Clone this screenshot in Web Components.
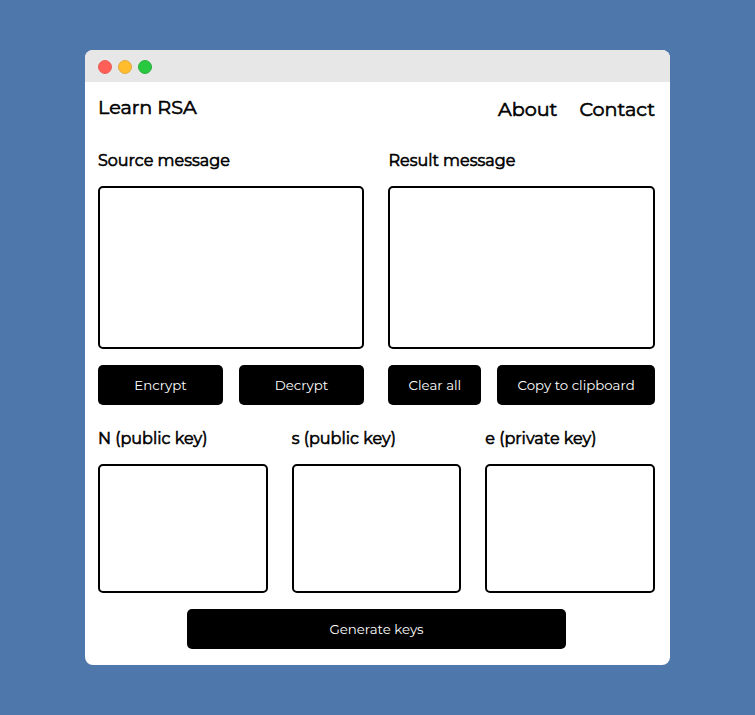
<!DOCTYPE html>
<html lang="en">
<head>
<meta charset="utf-8">
<title>Learn RSA</title>
<style>
html, body { margin: 0; height: 100%; }
body { background: #4e77ab; color: #000; font-family: Montserrat, Inter, "Open Sans", sans-serif; }
</style>
</head>
<body>
<rsa-app></rsa-app>
<script>
function define(name, html) {
  const template = document.createElement('template');
  template.innerHTML = html;
  customElements.define(name, class extends HTMLElement {
    connectedCallback() {
      if (!this.shadowRoot) {
        this.attachShadow({ mode: 'open' }).append(template.content.cloneNode(true));
      }
    }
  });
}

define('window-frame', `
<style>
:host { display: flex; flex-direction: column; width: 585px; height: 615px; border-radius: 8px; background: #fff; overflow: hidden; }
.bar { display: flex; gap: 6px; box-sizing: border-box; height: 32px; flex: none; padding: 10px 0 0 13px; background: #e7e7e7; }
i { box-sizing: border-box; width: 14px; height: 14px; border-radius: 50%; border: 1px solid; }
.r { background: #ff5f57; border-color: #ec5f59; }
.y { background: #ffbd2e; border-color: #e2aa40; }
.g { background: #28c940; border-color: #2aae3e; }
main { padding: 0 15px 0 13px; }
</style>
<div class="bar"><i class="r"></i><i class="y"></i><i class="g"></i></div>
<main><slot></slot></main>`);

define('site-header', `
<style>
:host { display: flex; justify-content: space-between; height: 65px; box-sizing: border-box; padding-top: 13px; font-size: 19.2px; line-height: 24px; -webkit-text-stroke: 0.6px #000; }
nav { display: flex; gap: 22px; padding-top: 2px; }
</style>
<span class="brand">Learn RSA</span>
<nav><span>About</span><span>Contact</span></nav>`);

define('text-panel', `
<style>
:host { display: flex; flex-direction: column; flex: 1 1 0; min-width: 0; }
label { display: block; box-sizing: border-box; height: 39px; padding-top: 1px; font-size: 16px; line-height: 26px; font-weight: 400; -webkit-text-stroke: 0.6px #000; }
textarea { display: block; box-sizing: border-box; width: 100%; height: var(--box-height); margin: 0; border: 2px solid #000; border-radius: 5px; resize: none; background: #fff; outline: none; }
.actions { display: flex; gap: 16px; }
::slotted(action-button) { margin-top: 16px; }
</style>
<label for="box"><slot name="label"></slot></label>
<textarea id="box"></textarea>
<div class="actions"><slot></slot></div>`);

define('action-button', `
<style>
:host { display: block; flex: 1 1 auto; }
button { display: block; width: 100%; height: 40px; margin: 0; padding: 0; border: 0; border-radius: 5px; background: #000; color: #fff; font-family: inherit; font-size: 13.333px; line-height: 40px; font-weight: 400; }
</style>
<button type="button"><slot></slot></button>`);

define('rsa-app', `
<style>
:host { display: flex; justify-content: center; align-items: center; height: 715px; }
section { display: flex; gap: 24px; }
.messages { --box-height: 163px; }
.messages text-panel:first-child { flex: 0 0 266.48px; }
.keys { --box-height: 129px; margin-top: 20px; }
.half { flex: 0 0 125px; }
.clear { flex: 0 0 92.8px; }
footer { display: flex; justify-content: center; margin-top: 16px; }
.generate { flex: 0 0 379px; }
</style>
<window-frame>
  <site-header></site-header>
  <section class="messages">
    <text-panel>
      <span slot="label">Source message</span>
      <action-button class="half">Encrypt</action-button>
      <action-button class="half">Decrypt</action-button>
    </text-panel>
    <text-panel>
      <span slot="label">Result message</span>
      <action-button class="clear">Clear all</action-button>
      <action-button>Copy to clipboard</action-button>
    </text-panel>
  </section>
  <section class="keys">
    <text-panel><span slot="label">N (public key)</span></text-panel>
    <text-panel><span slot="label">s (public key)</span></text-panel>
    <text-panel><span slot="label">e (private key)</span></text-panel>
  </section>
  <footer><action-button class="generate">Generate keys</action-button></footer>
</window-frame>`);
</script>
</body>
</html>
